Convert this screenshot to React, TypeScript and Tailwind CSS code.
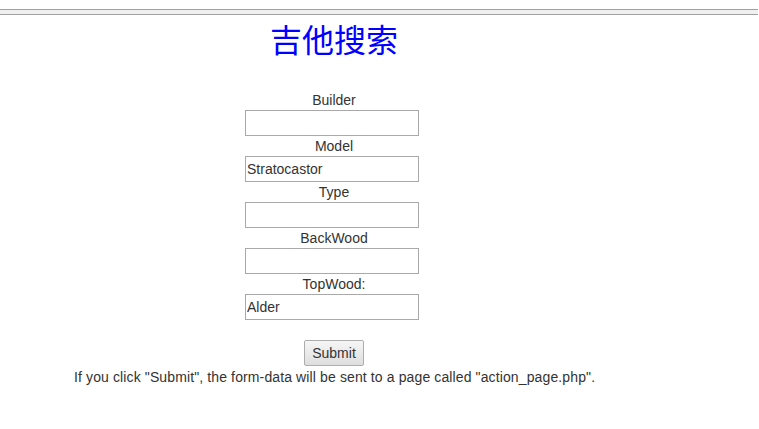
import React from 'react';

const fields = [
  { label: 'Builder', value: '' },
  { label: 'Model', value: 'Stratocastor' },
  { label: 'Type', value: '' },
  { label: 'BackWood', value: '' },
  { label: 'TopWood:', value: 'Alder' },
];

export default function App() {
  return (
    <div className="min-h-[429px] bg-white text-[#333] font-['Liberation_Sans',Arial,sans-serif] text-[14px]">
      {/* top rule */}
      <div className="pt-[9px] pr-[1px]">
        <div className="h-[6px] border-y border-[#a0a0a0] bg-[#f0f0f0]" />
      </div>

      <div className="ml-[74px] w-[520px] text-center">
        <h1 className="mt-[3px] mb-[32px] h-[40px] text-[32px] leading-[40px] font-normal text-[#0000ff] font-['Noto_Sans_CJK_SC',sans-serif]">
          吉他搜索
        </h1>

        <form onSubmit={e => e.preventDefault()}>
          {fields.map(f => (
            <div key={f.label}>
              <div className="leading-[20px]">{f.label}</div>
              <input
                type="text"
                defaultValue={f.value}
                className="block ml-[171px] w-[174px] h-[26px] border border-[#a9a9a9] px-[1px] text-[14px] text-[#333] bg-white outline-none"
              />
            </div>
          ))}
          <button
            type="submit"
            className="mt-[20px] w-[60px] h-[26px] border border-[#adadad] rounded-[2px] bg-gradient-to-b from-[#f6f6f6] to-[#dedede] text-[14px] text-[#333]"
          >
            Submit
          </button>
        </form>

        <p className="mt-[1px] leading-[20px] text-left whitespace-nowrap tracking-[0.12px]">
          If you click "Submit", the form-data will be sent to a page called "action_page.php".
        </p>
      </div>
    </div>
  );
}
